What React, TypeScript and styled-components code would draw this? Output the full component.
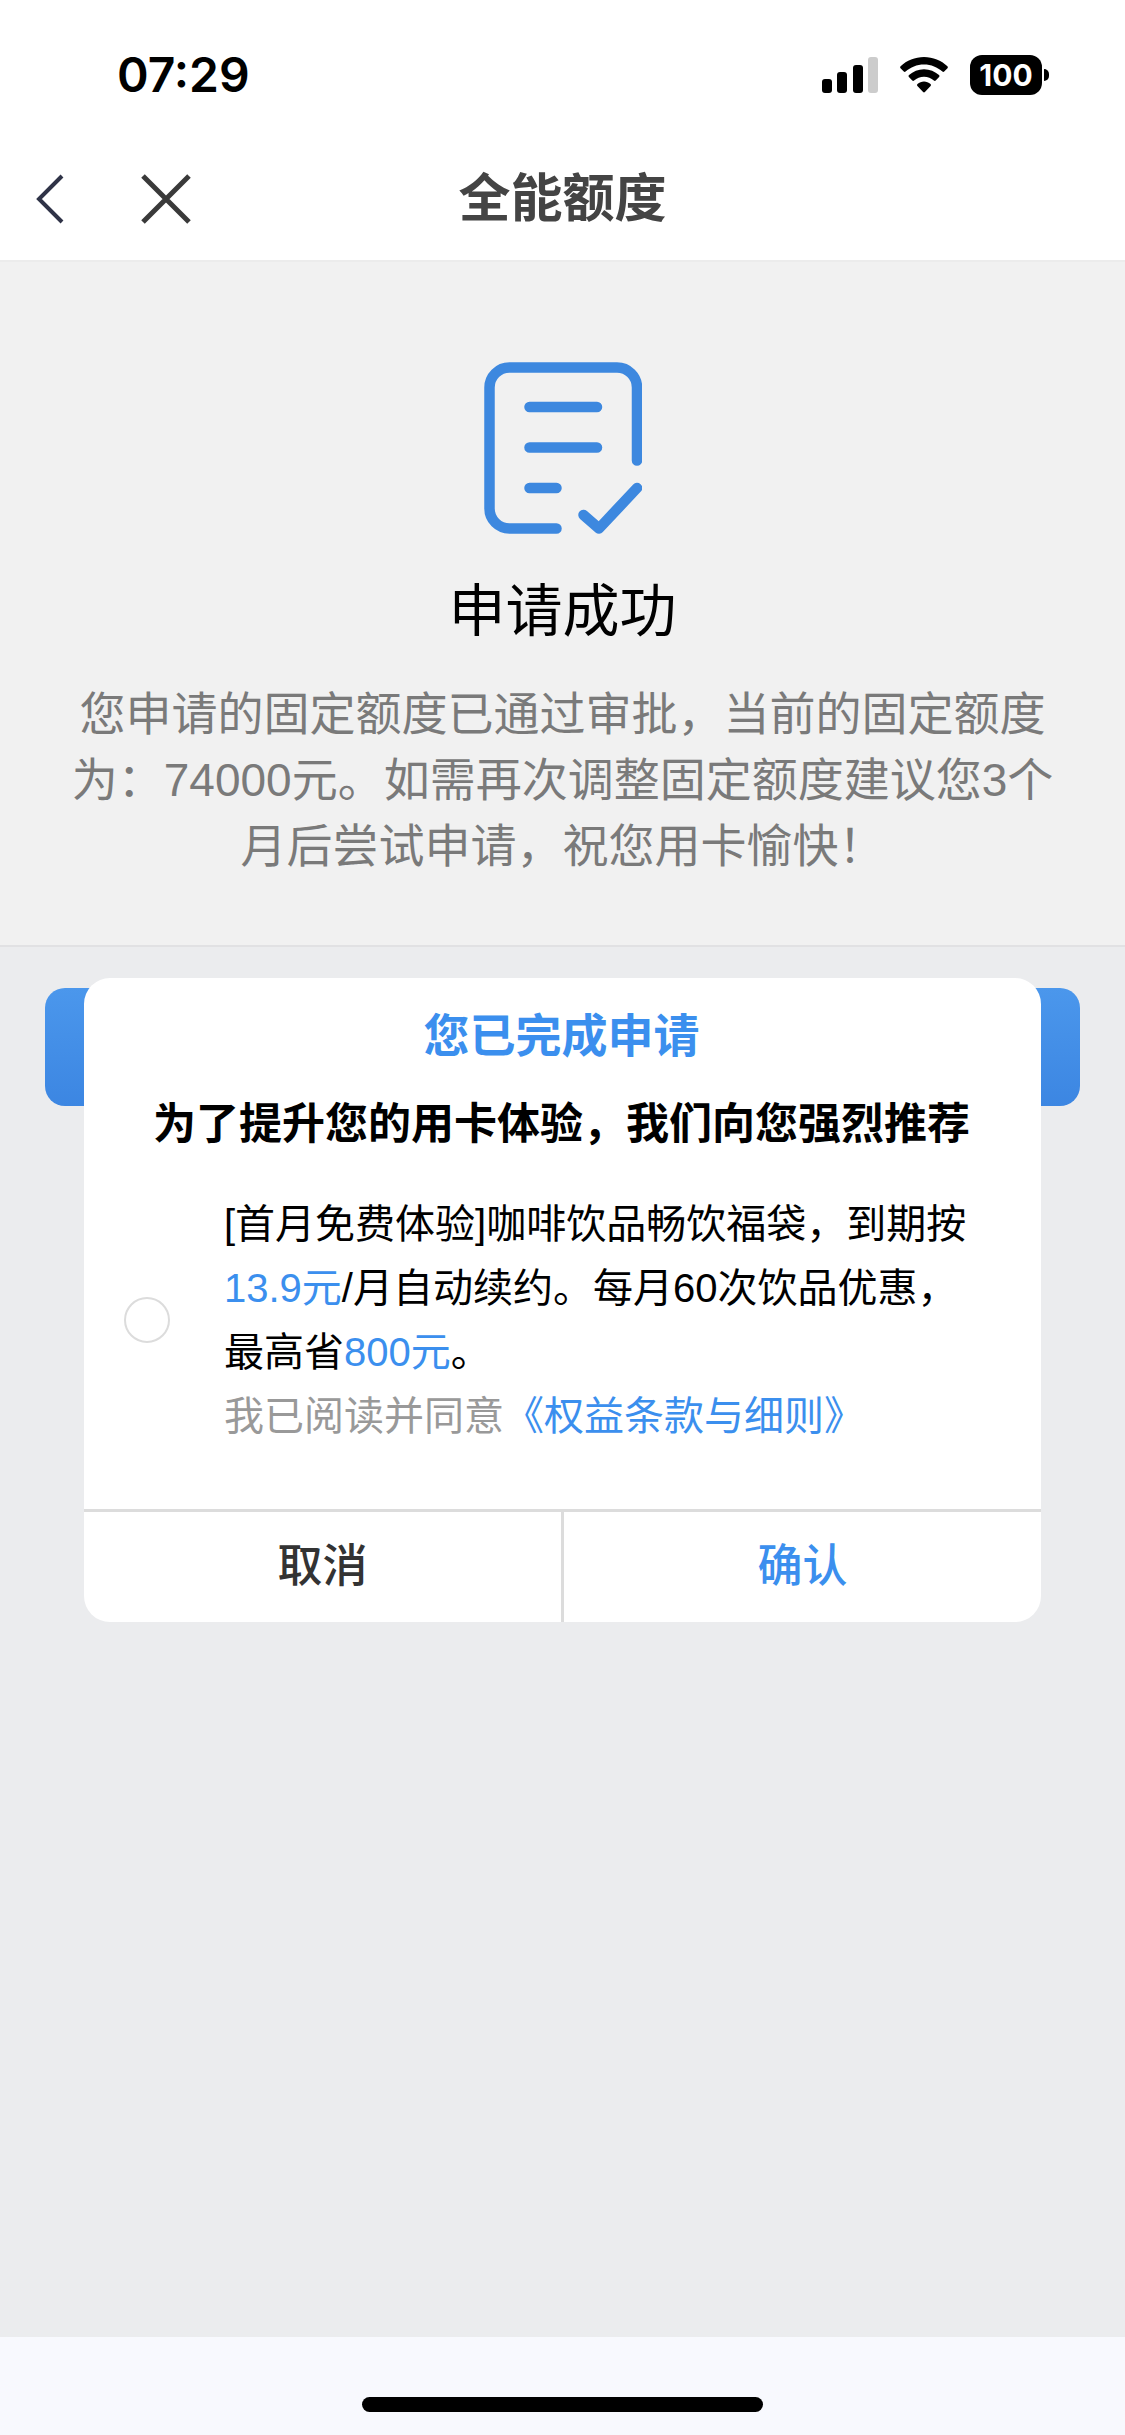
import React, { useState } from "react";
import styled, { createGlobalStyle } from "styled-components";

const BLUE = "#3b8fee";

const GlobalStyle = createGlobalStyle`
  *, *::before, *::after { box-sizing: border-box; }
  body {
    margin: 0;
    font-family: "Liberation Sans", "Noto Sans CJK SC", sans-serif;
    color: #000;
  }
  button { font-family: inherit; padding: 0; border: 0; background: none; cursor: pointer; }
  h1, h2, p { margin: 0; }
  svg { display: block; }
`;

const Page = styled.div`
  display: flex;
  flex-direction: column;
  min-height: 100vh;
  background: #fff;
`;

const StatusBar = styled.div`
  display: flex;
  align-items: center;
  justify-content: space-between;
  height: 136px;
  padding: 14px 76px 0 117px;
`;

const Time = styled.time`
  font: 600 48px/64px Inter, sans-serif;
`;

const StatusIcons = styled.div`
  display: flex;
  align-items: center;
  gap: 22px;
`;

const Battery = styled.div`
  display: flex;
  align-items: center;
  gap: 2px;
`;

const BatteryLevel = styled.span`
  width: 72px;
  height: 40px;
  border-radius: 12px;
  background: #000;
  color: #fff;
  font: 700 30px/40px Inter, sans-serif;
  text-align: center;
`;

const BatteryCap = styled.span`
  width: 5px;
  height: 12px;
  border-radius: 0 6px 6px 0;
  background: #000;
`;

const NavBar = styled.header`
  display: grid;
  grid-template-columns: 1fr auto 1fr;
  align-items: center;
  height: 126px;
  padding-top: 2px;
  border-bottom: 2px solid #ececec;
`;

const NavActions = styled.div`
  display: flex;
  gap: 60px;
  padding-left: 22px;
`;

const IconButton = styled.button`
  display: grid;
  place-items: center;
  width: 56px;
  height: 64px;
`;

const NavTitle = styled.h1`
  font-size: 52px;
  line-height: 64px;
  font-weight: 700;
  color: #444;
`;

const Main = styled.main`
  position: relative;
  flex: 1;
  background: #ebecee;
`;

const Result = styled.section`
  display: flex;
  flex-direction: column;
  align-items: center;
  padding: 100px 64px 66px;
  background: #f1f1f1;
  border-bottom: 2px solid #e1e1e3;
`;

const ResultTitle = styled.h2`
  margin-top: 41px;
  font-size: 57px;
  line-height: 72px;
  font-weight: 400;
`;

const ResultText = styled.p`
  margin-top: 34px;
  font-size: 46px;
  line-height: 66px;
  text-align: center;
  color: #7a7a7a;
`;

const ActionArea = styled.div`
  padding: 41px 45px;
`;

const PrimaryButton = styled.button`
  display: block;
  width: 100%;
  height: 118px;
  border-radius: 20px;
  background: linear-gradient(#4b97ec, #3c86e2);
`;

const Overlay = styled.div`
  position: absolute;
  inset: 0;
  display: flex;
  align-items: center;
  padding: 0 84px;
`;

const Dialog = styled.div`
  flex: 1;
  overflow: hidden;
  border-radius: 26px;
  background: #fff;
`;

const DialogBody = styled.div`
  padding: 26px 60px 61px 40px;
`;

const DialogHeadings = styled.div`
  display: flex;
  flex-direction: column;
  align-items: center;
  gap: 24px;
  padding-left: 18px;
  white-space: nowrap;
`;

const DialogTitle = styled.h2`
  font-size: 46px;
  line-height: 64px;
  font-weight: 700;
  color: ${BLUE};
`;

const DialogLead = styled.p`
  font-size: 43px;
  line-height: 64px;
  font-weight: 700;
`;

const Offer = styled.div`
  display: flex;
  align-items: center;
  gap: 54px;
  margin-top: 36px;
`;

const OfferRadio = styled.input`
  appearance: none;
  flex: none;
  width: 46px;
  height: 46px;
  margin: 0;
  border: 2px solid #dcdcdc;
  border-radius: 50%;
  background: #fff;
  &:checked { border: 14px solid ${BLUE}; }
`;

const OfferText = styled.div`
  font-size: 40px;
  line-height: 64px;
`;

const Highlight = styled.span`
  color: ${BLUE};
`;

const Agreement = styled.p`
  color: #999;
`;

const TermsLink = styled.a`
  color: ${BLUE};
  text-decoration: none;
`;

const DialogActions = styled.div`
  display: flex;
  border-top: 3px solid #dcdcdc;
`;

const DialogButton = styled.button<{ $confirm?: boolean }>`
  flex: 1;
  height: 110px;
  font-size: 45px;
  line-height: 64px;
  font-weight: 500;
  color: ${(p) => (p.$confirm ? BLUE : "#333")};
  & + & { border-left: 3px solid #dcdcdc; }
`;

const HomeArea = styled.footer`
  display: flex;
  justify-content: center;
  height: 98px;
  padding-top: 60px;
  background: #f8f9fe;
`;

const HomeIndicator = styled.span`
  width: 401px;
  height: 15px;
  border-radius: 8px;
  background: #000;
`;

const SignalIcon = () => (
  <svg width="56" height="36" viewBox="0 0 56 36" aria-hidden="true">
    <rect x="0" y="22" width="10" height="14" rx="3" />
    <rect x="15" y="15" width="10" height="21" rx="3" />
    <rect x="31" y="8" width="10" height="28" rx="3" />
    <rect x="46" y="0" width="10" height="36" rx="3" fill="#ccc" />
  </svg>
);

const WifiIcon = () => (
  <svg width="48" height="36" viewBox="0 0 48 36" aria-hidden="true">
    <path d="M24 0C33 0 41.300 3.500 47.400 9.200C48 9.800 48 10.600 47.500 11.200L44.200 14.600C43.700 15.100 43 15.100 42.400 14.600C37.500 10.100 31.100 7.400 24 7.400S10.500 10.100 5.600 14.600C5 15.100 4.300 15.100 3.800 14.600L.5 11.200C0 10.600 0 9.800.6 9.200C6.700 3.500 15 0 24 0Z" />
    <path d="M24 12.300C29.700 12.300 35 14.500 39 18.100C39.600 18.700 39.600 19.500 39.100 20L35.700 23.500C35.200 24 34.500 24 33.900 23.500C31.200 21.200 27.800 19.700 24 19.700S16.800 21.200 14.100 23.500C13.500 24 12.800 24 12.300 23.500L8.900 20C8.400 19.500 8.400 18.700 9 18.100C13 14.500 18.300 12.300 24 12.300Z" />
    <path d="M24 24.600C26.400 24.600 28.700 25.500 30.500 27C31.100 27.500 31.100 28.300 30.600 28.900L24.900 35.100C24.400 35.600 23.600 35.600 23.100 35.100L17.400 28.900C16.900 28.300 16.900 27.500 17.500 27C19.300 25.500 21.600 24.600 24 24.600Z" />
  </svg>
);

const BackIcon = () => (
  <svg width="30" height="50" viewBox="0 0 30 50" fill="none" stroke="#2f3347" strokeWidth="4" aria-hidden="true">
    <path d="M27 2L4 25L27 48" />
  </svg>
);

const CloseIcon = () => (
  <svg width="50" height="50" viewBox="0 0 50 50" fill="none" stroke="#3a3a3a" strokeWidth="5" aria-hidden="true">
    <path d="M2 2L48 48M48 2L2 48" />
  </svg>
);

const DocumentCheckIcon = () => (
  <svg
    width="158"
    height="172"
    viewBox="0 0 158 172"
    fill="none"
    stroke="#3d88df"
    strokeWidth="10.500"
    strokeLinecap="round"
    strokeLinejoin="round"
    aria-hidden="true"
  >
    <path d="M153 98.500V25.500A20 20 0 0 0 133 5.500H25.500A20 20 0 0 0 5.500 25.500V146.500A20 20 0 0 0 25.500 166.500H72.500" />
    <path d="M45.500 45H113M45.500 85.500H113M45.500 126H72.500M99.500 153L115 166.500L153 126" />
  </svg>
);

export default function App() {
  const [accepted, setAccepted] = useState(false);

  return (
    <>
      <GlobalStyle />
      <Page lang="zh-CN">
        <StatusBar>
          <Time>07:29</Time>
          <StatusIcons>
            <SignalIcon />
            <WifiIcon />
            <Battery>
              <BatteryLevel>100</BatteryLevel>
              <BatteryCap />
            </Battery>
          </StatusIcons>
        </StatusBar>

        <NavBar>
          <NavActions>
            <IconButton type="button" aria-label="返回">
              <BackIcon />
            </IconButton>
            <IconButton type="button" aria-label="关闭">
              <CloseIcon />
            </IconButton>
          </NavActions>
          <NavTitle>全能额度</NavTitle>
        </NavBar>

        <Main>
          <Result>
            <DocumentCheckIcon />
            <ResultTitle>申请成功</ResultTitle>
            <ResultText>
              您申请的固定额度已通过审批，当前的固定额度为：74000元。如需再次调整固定额度建议您3个月后尝试申请，祝您用卡愉快！
            </ResultText>
          </Result>
          <ActionArea>
            <PrimaryButton type="button" aria-label="完成" />
          </ActionArea>

          <Overlay>
            <Dialog role="dialog" aria-modal="true" aria-labelledby="dialog-title">
              <DialogBody>
                <DialogHeadings>
                  <DialogTitle id="dialog-title">您已完成申请</DialogTitle>
                  <DialogLead>为了提升您的用卡体验，我们向您强烈推荐</DialogLead>
                </DialogHeadings>
                <Offer>
                  <OfferRadio
                    type="radio"
                    id="offer"
                    name="offer"
                    checked={accepted}
                    onChange={() => setAccepted(true)}
                  />
                  <OfferText>
                    <label htmlFor="offer">
                      [首月免费体验]咖啡饮品畅饮福袋，到期按<Highlight>13.9元</Highlight>
                      /月自动续约。每月60次饮品优惠，最高省<Highlight>800元</Highlight>。
                    </label>
                    <Agreement>
                      我已阅读并同意<TermsLink href="#terms">《权益条款与细则》</TermsLink>
                    </Agreement>
                  </OfferText>
                </Offer>
              </DialogBody>
              <DialogActions>
                <DialogButton type="button">取消</DialogButton>
                <DialogButton type="button" $confirm>
                  确认
                </DialogButton>
              </DialogActions>
            </Dialog>
          </Overlay>
        </Main>

        <HomeArea>
          <HomeIndicator />
        </HomeArea>
      </Page>
    </>
  );
}
